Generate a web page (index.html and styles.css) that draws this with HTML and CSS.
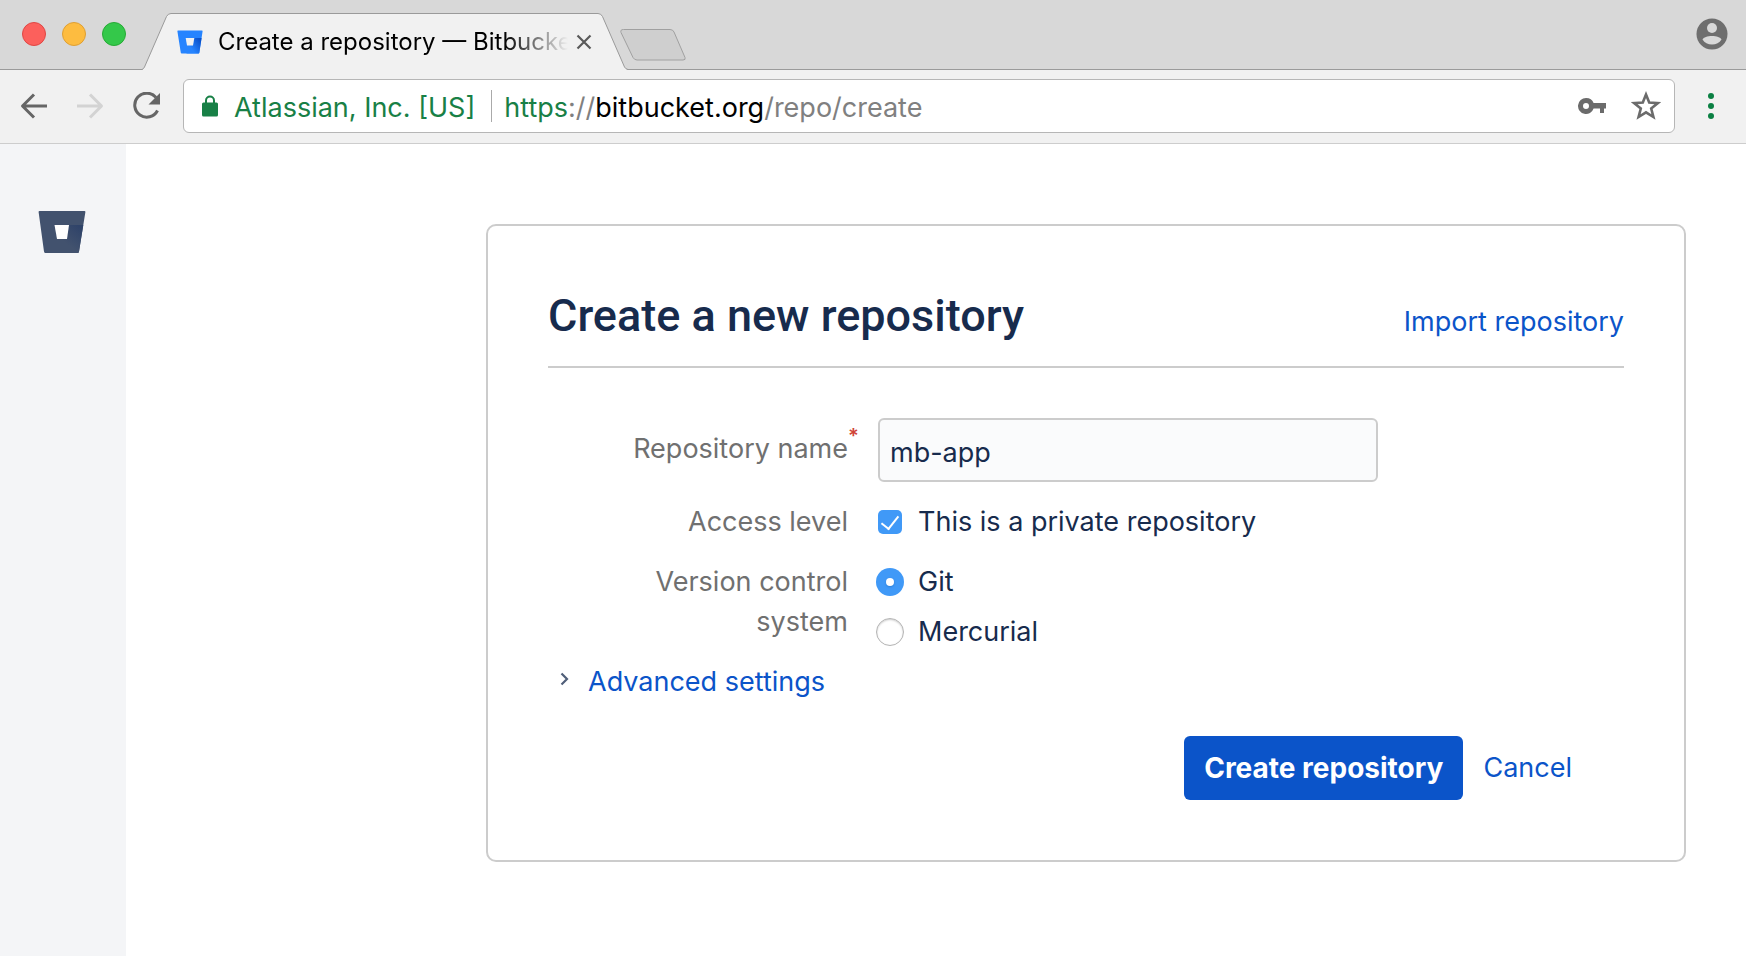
FILE: index.html
```html
<!DOCTYPE html>
<html lang="en">
<head>
<meta charset="utf-8">
<title>Create a repository — Bitbucket</title>
<link rel="stylesheet" href="styles.css">
</head>
<body>
<div class="browser">
  <header class="tabstrip">
    <div class="lights">
      <button class="light light-close" aria-label="Close window"></button>
      <button class="light light-min" aria-label="Minimize window"></button>
      <button class="light light-max" aria-label="Zoom window"></button>
    </div>
    <div class="tab">
      <svg class="tab-shape" viewBox="0 0 486 57" aria-hidden="true">
        <path d="M0 57 Q1.500 56 2.500 54 L24.500 3.500 Q26 .5 29 .5 H456 Q459 .5 460.500 3.500 L482.500 54 Q483.500 56 486 57 Z" fill="#f1f1f1"/>
        <path d="M0 56.500 Q1.500 56 2.500 54 L24.500 3.500 Q26 .5 29 .5 H456 Q459 .5 460.500 3.500 L482.500 54 Q483.500 56 486 56.500" fill="none" stroke="#9a9a9a"/>
      </svg>
      <svg class="favicon" viewBox="0 0 26 24" aria-hidden="true">
        <defs><linearGradient id="fav" x1="1" y1="0.100" x2="0" y2="0.900"><stop offset=".1" stop-color="#0a52cc"/><stop offset=".7" stop-color="#2684ff"/></linearGradient></defs>
        <path d="M1 .5h24q.7 0 .6.8L22.300 22.700q-.1.800-.9.800H4.700q-.8 0-.9-.8L.4 1.300Q.3.500 1 .5Z" fill="#2684ff"/>
        <path d="M17.300 8H24.600l-2.300 14.700q-.1.800-.9.800H9.500L10 15.500h6Z" fill="url(#fav)"/>
        <path d="M8.700 8h8.600L16 15.500h-6Z" fill="#f1f1f1"/>
      </svg>
      <span class="tab-title">Create a repository — Bitbucket</span>
      <button class="tab-close" aria-label="Close tab">
        <svg width="16" height="16" viewBox="0 0 16 16"><path d="M1.500 1.500 14.500 14.500M14.500 1.500 1.500 14.500" stroke="#5a5a5a" stroke-width="2.200"/></svg>
      </button>
    </div>
    <button class="newtab" aria-label="New tab">
      <svg width="66" height="32" viewBox="0 0 66 32"><path d="M3.500 .5H50Q53 .5 54 3L65 28.500Q66 31 63 31H17Q14.500 31 13 28.500L1 3.500Q0 .5 3.500 .5Z" fill="#cfcfcf" stroke="#a0a0a0"/></svg>
    </button>
    <button class="profile" aria-label="Profile">
      <svg width="32" height="32" viewBox="0 0 32 32"><circle cx="16" cy="16" r="15.500" fill="#6e6e6e"/><circle cx="16" cy="10" r="5" fill="#d8d8d8"/><path d="M6.500 21.500C7.500 19.500 11.500 18 16 18s8.500 1.500 9.500 3.500C23.500 25 20 26.500 16 26.500S8.500 25 6.500 21.500Z" fill="#d8d8d8"/></svg>
    </button>
  </header>

  <nav class="toolbar" aria-label="Browser">
    <button class="nav-btn" aria-label="Back">
      <svg width="28" height="28" viewBox="0 0 28 28" fill="none" stroke="#666" stroke-width="3" stroke-linejoin="round"><path d="M27 14H3M14 2.500 2.500 14 14 25.500"/></svg>
    </button>
    <button class="nav-btn" aria-label="Forward" disabled>
      <svg width="28" height="28" viewBox="0 0 28 28" fill="none" stroke="#d3d3d3" stroke-width="3" stroke-linejoin="round"><path d="M1 14h24M14 2.500 25.500 14 14 25.500"/></svg>
    </button>
    <button class="nav-btn" aria-label="Reload">
      <svg width="28" height="28" viewBox="0 0 28 28"><path d="M24 5.500A12 12 0 1 0 25.500 18.500" fill="none" stroke="#666" stroke-width="3"/><path d="M28 1V12.500H16.500Z" fill="#666"/></svg>
    </button>
    <div class="omnibox">
      <svg class="lock" width="16" height="22" viewBox="0 0 16 22" aria-hidden="true"><rect y="7.500" width="16" height="14" rx="1.500" fill="#188046"/><path d="M4 8.500V5.500a4 4 0 0 1 8 0v3" fill="none" stroke="#188046" stroke-width="2"/></svg>
      <span class="issuer">Atlassian, Inc. [US]</span>
      <span class="url"><span class="scheme">https</span>://<span class="host">bitbucket.org</span>/repo/create</span>
      <button class="icon-btn" aria-label="Saved password">
        <svg width="28" height="18" viewBox="0 0 28 18" fill="#6b6b6b"><path fill-rule="evenodd" d="M8 1a8 8 0 1 0 7.600 10.500H22V16h4v-4.500h2V6H15.600A8 8 0 0 0 8 1Zm0 5a3 3 0 1 1 0 6 3 3 0 0 1 0-6Z"/></svg>
      </button>
      <button class="icon-btn" aria-label="Bookmark this page">
        <svg width="30" height="30" viewBox="0 0 30 30" fill="none" stroke="#6b6b6b" stroke-width="2.600"><path d="m15 3.500 3.200 8 8.800.6-6.800 5.500 2.200 8.400-7.400-4.700L7.600 26l2.200-8.400L3 12.100l8.800-.6Z"/></svg>
      </button>
    </div>
    <button class="menu-btn" aria-label="Browser menu">
      <svg width="6" height="26" viewBox="0 0 6 26" fill="#0b8043"><circle cx="3" cy="3" r="3"/><circle cx="3" cy="13" r="3"/><circle cx="3" cy="23" r="3"/></svg>
    </button>
  </nav>

  <div class="page">
    <aside class="sidebar">
      <a href="#" class="logo" aria-label="Bitbucket">
        <svg width="48" height="44" viewBox="0 0 48 44"><defs><linearGradient id="lg" x1="1" y1="0" x2=".2" y2="1"><stop offset=".1" stop-color="#2f4369"/><stop offset=".7" stop-color="#42526e"/></linearGradient></defs><path d="M1.500 1h45q1 0 .9 1L41 41.500q-.2 1.500-1.500 1.500h-32Q6.300 43 6 41.500L.6 2Q.5 1 1.500 1Z" fill="#42526e"/><path d="M31 15H45.300l-4.300 26.500q-.2 1.500-1.500 1.500H18l.5-14h10Z" fill="url(#lg)"/><path d="M16.500 15H31l-2 14h-10Z" fill="#fff"/></svg>
      </a>
    </aside>
    <main class="content">
      <form class="card">
        <div class="card-head">
          <h1>Create a new repository</h1>
          <a href="#">Import repository</a>
        </div>
        <div class="fields">
          <label class="field-label name-label" for="name">Repository name<span class="required">*</span></label>
          <input class="text-field" id="name" type="text" value="mb-app">

          <span class="field-label">Access level</span>
          <label class="choice"><input type="checkbox" checked>This is a private repository</label>

          <span class="field-label" id="vcs">Version control system</span>
          <div class="choices" role="radiogroup" aria-labelledby="vcs">
            <label class="choice"><input type="radio" name="vcs" checked>Git</label>
            <label class="choice"><input type="radio" name="vcs">Mercurial</label>
          </div>
        </div>
        <a href="#" class="advanced">
          <svg width="10" height="14" viewBox="0 0 10 14" fill="none" stroke="#505f79" stroke-width="2.200"><path d="m1.500 1.500 5.500 5.500-5.500 5.500"/></svg>
          Advanced settings</a>
        <div class="actions">
          <button class="primary" type="button">Create repository</button>
          <a href="#">Cancel</a>
        </div>
      </form>
    </main>
  </div>
</div>
</body>
</html>
```

FILE: styles.css
```css
* { box-sizing: border-box; }

body {
  margin: 0;
  background: #fff;
  color: #172b4d;
  font: 27px/40px Inter, "Liberation Sans", sans-serif;
}

button {
  border: 0;
  padding: 0;
  background: none;
  font: inherit;
  color: inherit;
}

svg { display: block; }

a {
  color: #0b54c9;
  text-decoration: none;
}

.browser {
  min-height: 100vh;
  display: flex;
  flex-direction: column;
}

/* Tab strip */
.tabstrip {
  display: flex;
  height: 70px;
  background: #d8d8d8;
  border-bottom: 1px solid #9a9a9a;
}

.lights {
  display: flex;
  gap: 16px;
  padding: 22px 16px 0 22px;
}

.light {
  width: 24px;
  height: 24px;
  border-radius: 50%;
  border: 1px solid;
}

.light-close { background: #fc605c; border-color: #df4744; }
.light-min { background: #fdbc40; border-color: #de9f34; }
.light-max { background: #34c84a; border-color: #27aa35; }

.tab {
  position: relative;
  display: flex;
  align-items: center;
  width: 486px;
  height: 57px;
  margin-top: 13px;
  padding: 0 36px 0 35px;
}

.tab-shape {
  position: absolute;
  inset: 0;
  width: 100%;
  height: 100%;
}

.favicon {
  position: relative;
  flex: none;
  width: 26px;
  height: 24px;
}

.tab-title {
  position: relative;
  flex: 1;
  min-width: 0;
  margin-left: 15px;
  overflow: hidden;
  white-space: nowrap;
  color: #000;
  font-size: 24px;
  line-height: 32px;
  -webkit-mask-image: linear-gradient(to left, transparent, #000 64px);
  mask-image: linear-gradient(to left, transparent, #000 64px);
}

.tab-close {
  position: relative;
  margin-left: 8px;
}

.newtab {
  align-self: flex-start;
  margin: 29px 0 0 -8px;
}

.profile {
  align-self: flex-start;
  margin: 18px 18px 0 auto;
}

/* Toolbar */
.toolbar {
  display: flex;
  align-items: center;
  height: 74px;
  padding: 0 32px 2px 20px;
  background: #f1f1f1;
  border-bottom: 1px solid #cdcdcd;
}

.nav-btn { margin-right: 28px; }

.omnibox {
  flex: 1;
  display: flex;
  align-items: center;
  height: 54px;
  margin-right: 33px;
  margin-left: -5px;
  padding: 0 13px 0 18px;
  background: #fff;
  border: 1px solid #b6b6b6;
  border-radius: 6px;
  white-space: nowrap;
}

.issuer,
.url {
  padding-top: 3px;
  line-height: 29px;
}

.issuer {
  margin-left: 16px;
  padding-right: 16px;
  border-right: 1px solid #aaa;
  color: #188046;
}

.url {
  flex: 1;
  margin-left: 12px;
  color: #808080;
}

.scheme { color: #188046; }
.host { color: #000; }

.icon-btn { margin-left: 25px; }

/* Page */
.page {
  flex: 1;
  display: flex;
}

.sidebar {
  width: 126px;
  padding: 66px 38px;
  background: #f4f5f7;
}

.logo { display: block; }

.content {
  flex: 1;
  padding: 80px 60px 94px 360px;
}

.card {
  padding: 60px;
  border: 2px solid #ccc;
  border-radius: 10px;
}

.card-head {
  display: flex;
  align-items: baseline;
  justify-content: space-between;
  padding-bottom: 20px;
  border-bottom: 2px solid #ccc;
}

h1 {
  margin: 0;
  font-family: Roboto, Inter, sans-serif;
  font-size: 45px;
  line-height: 60px;
  font-weight: 500;
}

.fields {
  display: grid;
  grid-template-columns: 240px 1fr;
  column-gap: 30px;
  row-gap: 20px;
  padding: 50px 60px 0;
}

.field-label {
  color: #707070;
  text-align: right;
}

.name-label {
  position: relative;
  padding-top: 11px;
}

.required {
  position: absolute;
  left: 100%;
  top: -2px;
  color: #d04437;
  font-size: 20px;
  font-weight: 600;
}

.text-field {
  width: 500px;
  height: 64px;
  padding: 4px 10px 0;
  border: 2px solid #ccc;
  border-radius: 6px;
  background: #fafbfc;
  color: #172b4d;
  font: inherit;
}

.choices {
  display: grid;
  gap: 10px;
}

.choice {
  display: flex;
  align-items: center;
}

.choice input {
  appearance: none;
  flex: none;
  display: grid;
  place-items: center;
}

.choice input[type="checkbox"] {
  width: 24px;
  height: 24px;
  margin: 0 16px 0 0;
  border-radius: 5px;
  background: #4099f7;
}

.choice input[type="checkbox"]::before {
  content: "";
  width: 8px;
  height: 15px;
  margin-bottom: 4px;
  border: solid #fff;
  border-width: 0 2px 2px 0;
  transform: rotate(38deg);
}

.choice input[type="radio"] {
  width: 28px;
  height: 28px;
  margin: 0 14px 0 -2px;
  border: 1px solid #b4b4b4;
  border-radius: 50%;
  box-shadow: inset 0 1px 2px #ccc;
}

.choice input[type="radio"]:checked {
  border: 0;
  background: #4099f7;
  box-shadow: none;
}

.choice input[type="radio"]:checked::before {
  content: "";
  width: 8px;
  height: 8px;
  border-radius: 50%;
  background: #fff;
  box-shadow: 0 1px 2px #2b7fd9;
}

.advanced {
  display: inline-flex;
  align-items: center;
  gap: 18px;
  margin-top: 10px;
  padding-left: 12px;
}

.advanced svg { margin-bottom: 6px; }

.actions {
  display: flex;
  align-items: center;
  justify-content: flex-end;
  gap: 20px;
  padding: 34px 52px 0 0;
}

.primary {
  height: 64px;
  padding: 0 20px;
  border-radius: 6px;
  background: #0b54c9;
  color: #fff;
  font-size: 28px;
  font-weight: 700;
}
```
